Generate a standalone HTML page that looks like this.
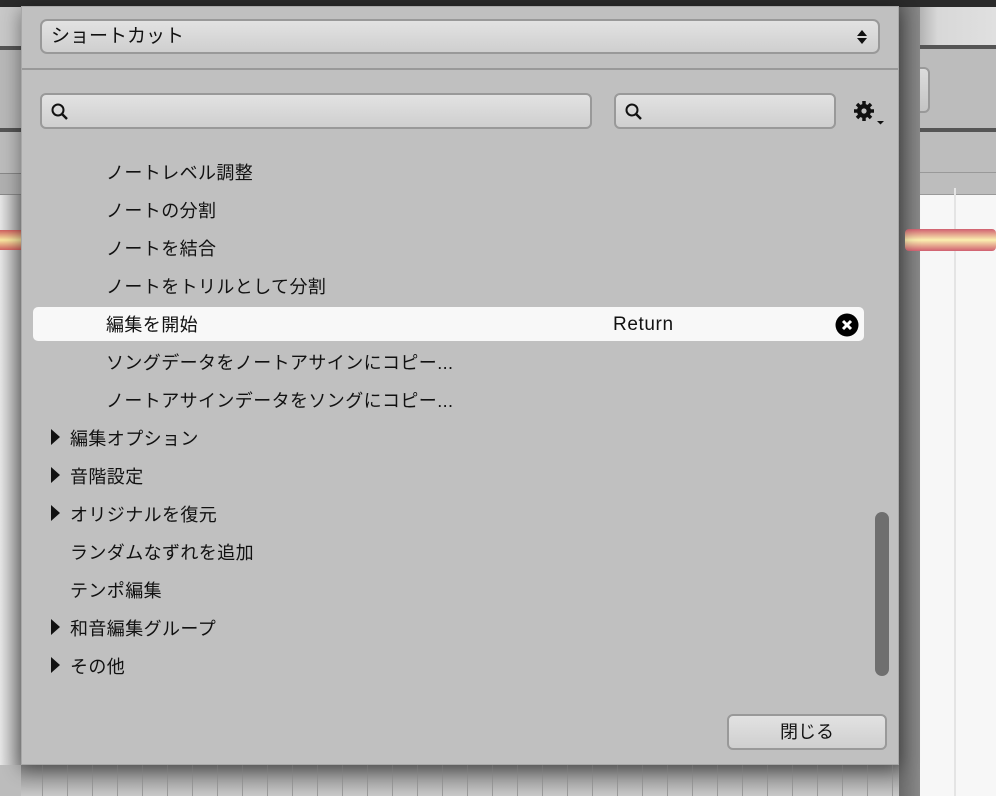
<!DOCTYPE html>
<html><head><meta charset="utf-8"><style>
*{margin:0;padding:0;box-sizing:border-box}
body{width:996px;height:796px;overflow:hidden;background:#bcbcbc;position:relative;font-family:"Liberation Sans","Noto Sans CJK JP",sans-serif;color:#111}
.a{position:absolute}
.dlg{left:21px;top:6px;width:878px;height:759px;background:#c0c0c0;border:1px solid #a8a8a8;box-shadow:0 4px 18px rgba(0,0,0,.45)}
.field{border:2px solid #999;border-radius:6px;background:linear-gradient(#e2e2e2,#cfcfcf)}
.row{font-size:18px;line-height:20px;letter-spacing:0.4px}
.tri{width:0;height:0;border-top:8px solid transparent;border-bottom:8px solid transparent;border-left:9px solid #111}
</style></head><body>
<div class="a" style="left:0;top:0;width:996px;height:7px;background:#2a2a2a"></div>
<div class="a" style="left:0;top:7px;width:21px;height:40px;background:#c8c8c8"></div>
<div class="a" style="left:0;top:46px;width:21px;height:4px;background:#555"></div>
<div class="a" style="left:0;top:50px;width:21px;height:78px;background:#b8b8b8"></div>
<div class="a" style="left:0;top:128px;width:21px;height:4px;background:#555"></div>
<div class="a" style="left:0;top:173px;width:21px;height:22px;background:#b0b0b0;border-top:1px solid #888;border-bottom:1px solid #888"></div>
<div class="a" style="left:0;top:195px;width:21px;height:570px;background:linear-gradient(90deg,#e6e6e6,#a0a0a0)"></div>
<div class="a" style="left:0;top:230px;width:21px;height:20px;background:linear-gradient(#d06060,#f8e8a0,#d06060)"></div>
<div class="a" style="left:899px;top:7px;width:97px;height:38px;background:linear-gradient(90deg,#888,#d8d8d8 40%,#e0e0e0)"></div>
<div class="a" style="left:899px;top:45px;width:97px;height:4px;background:#555"></div>
<div class="a" style="left:899px;top:49px;width:97px;height:80px;background:#bcbcbc"></div>
<div class="a" style="left:880px;top:67px;width:50px;height:46px;border:2px solid #999;border-radius:6px;background:linear-gradient(#dcdcdc,#c4c4c4)"></div>
<div class="a" style="left:899px;top:128px;width:97px;height:4px;background:#555"></div>
<div class="a" style="left:899px;top:132px;width:97px;height:63px;background:#bdbdbd;border-bottom:1px solid #999"></div>
<div class="a" style="left:899px;top:172px;width:97px;height:1px;background:#999"></div>
<div class="a" style="left:920px;top:195px;width:76px;height:601px;background:#f7f7f7"></div>
<div class="a" style="left:954px;top:188px;width:2px;height:608px;background:#e4e4e4"></div>
<div class="a" style="left:899px;top:7px;width:21px;height:789px;background:linear-gradient(90deg,#6a6a6a,#888)"></div>
<div class="a" style="left:905px;top:229px;width:91px;height:22px;background:linear-gradient(#d06070,#fbf0b0 50%,#d06070);border-radius:4px"></div>
<div class="a" style="left:21px;top:765px;width:878px;height:31px;background:linear-gradient(#888,#c8c8c8);"></div>
<div class="a" style="left:42px;top:765px;width:857px;height:31px;background:repeating-linear-gradient(90deg,#999 0 1px,transparent 1px 25px)"></div>

<div class="a dlg">
  <div class="a field" style="left:18px;top:12px;width:840px;height:35px;border-radius:7px;font-size:19px;line-height:31px;padding-left:9px">ショートカット
    <svg class="a" style="right:10px;top:8px" width="12" height="16" viewBox="0 0 12 16"><path d="M6 1L11 7H1Z M6 15L11 9H1Z" fill="#111"/></svg>
  </div>
  <div class="a" style="left:0;top:61px;width:876px;height:2px;background:#999"></div>
  <div class="a field" style="left:18px;top:86px;width:552px;height:36px">
    <svg class="a" style="left:8px;top:7px" width="20" height="20" viewBox="0 0 20 20"><circle cx="8" cy="8" r="5.5" fill="none" stroke="#111" stroke-width="2"/><path d="M12 12L17 17" stroke="#111" stroke-width="2.4"/></svg>
  </div>
  <div class="a field" style="left:592px;top:86px;width:222px;height:36px">
    <svg class="a" style="left:8px;top:7px" width="20" height="20" viewBox="0 0 20 20"><circle cx="8" cy="8" r="5.5" fill="none" stroke="#111" stroke-width="2"/><path d="M12 12L17 17" stroke="#111" stroke-width="2.4"/></svg>
  </div>
  <svg class="a" style="left:831px;top:93px" width="36" height="30" viewBox="0 0 36 30"><g transform="translate(11,11)" fill="#111"><circle r="7"/><g stroke="#111" stroke-width="3.5"><path d="M0-10V10M-10 0H10M-7-7L7 7M-7 7L7-7"/></g><circle r="2.6" fill="#c0c0c0"/></g><path d="M24 21h7l-3.5 3.5z" fill="#111"/></svg>

  <div class="a row" style="left:84px;top:156px">ノートレベル調整</div>
  <div class="a row" style="left:84px;top:194px">ノートの分割</div>
  <div class="a row" style="left:84px;top:232px">ノートを結合</div>
  <div class="a row" style="left:84px;top:270px">ノートをトリルとして分割</div>
  <div class="a" style="left:11px;top:300px;width:831px;height:34px;background:#f8f8f8;border-radius:5px"></div>
  <div class="a row" style="left:84px;top:308px">編集を開始</div>
  <div class="a row" style="left:591px;top:308px;font-size:19px;letter-spacing:0.6px">Return</div>
  <svg class="a" style="left:813px;top:306px" width="24" height="24" viewBox="0 0 24 24"><circle cx="12" cy="12" r="11.5" fill="#000"/><path d="M8 8L16 16M16 8L8 16" stroke="#fff" stroke-width="3"/></svg>
  <div class="a row" style="left:84px;top:346px">ソングデータをノートアサインにコピー...</div>
  <div class="a row" style="left:84px;top:384px">ノートアサインデータをソングにコピー...</div>
  <div class="a tri" style="left:29px;top:422px"></div><div class="a row" style="left:48px;top:422px">編集オプション</div>
  <div class="a tri" style="left:29px;top:460px"></div><div class="a row" style="left:48px;top:460px">音階設定</div>
  <div class="a tri" style="left:29px;top:498px"></div><div class="a row" style="left:48px;top:498px">オリジナルを復元</div>
  <div class="a row" style="left:48px;top:536px">ランダムなずれを追加</div>
  <div class="a row" style="left:48px;top:574px">テンポ編集</div>
  <div class="a tri" style="left:29px;top:612px"></div><div class="a row" style="left:48px;top:612px">和音編集グループ</div>
  <div class="a tri" style="left:29px;top:650px"></div><div class="a row" style="left:48px;top:650px">その他</div>
  <div class="a" style="left:853px;top:505px;width:14px;height:164px;background:#6f6f6f;border-radius:7px"></div>
  <div class="a field" style="left:705px;top:707px;width:160px;height:36px;font-size:18px;line-height:32px;text-align:center">閉じる</div>
</div>
</body></html>
